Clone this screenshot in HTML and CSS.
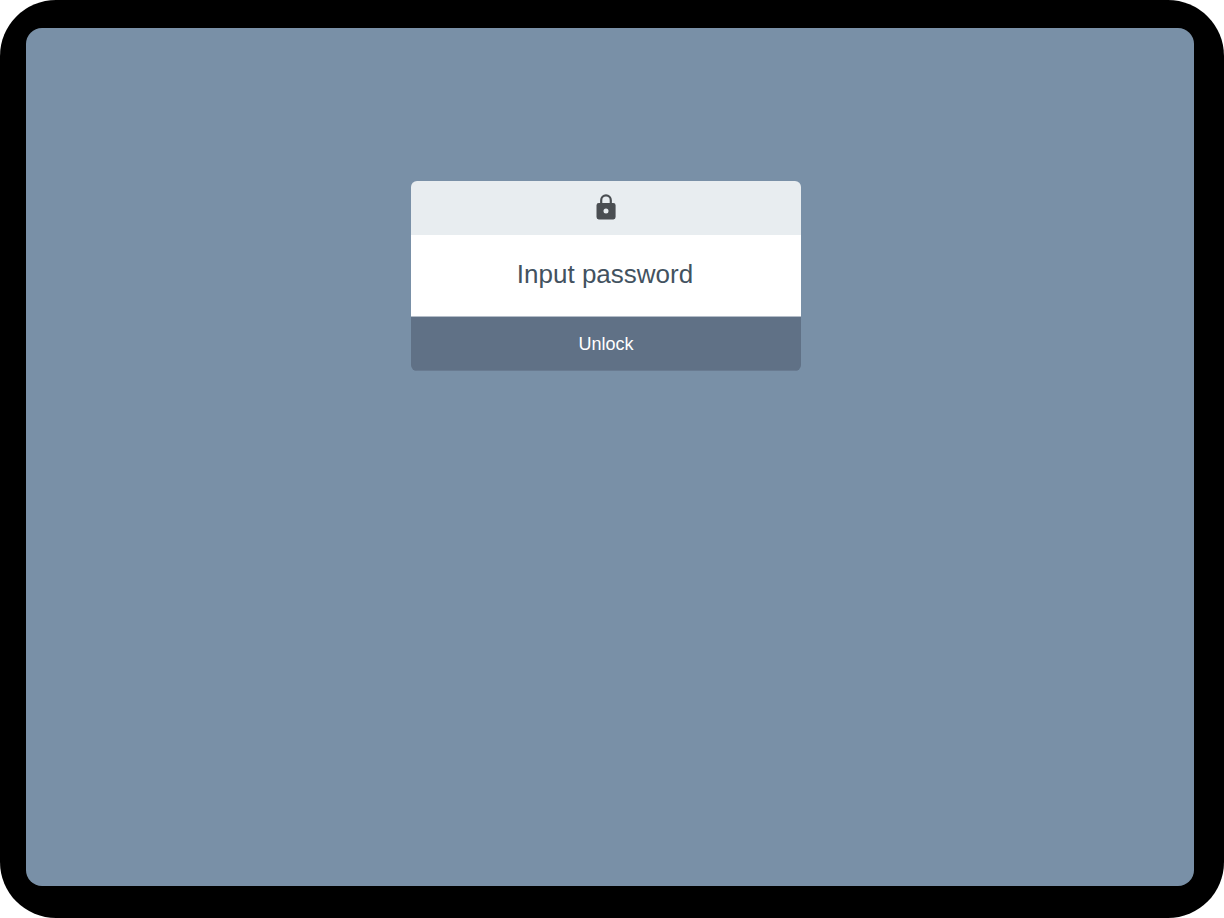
FILE: index.html
```
<!DOCTYPE html>
<html lang="en">
<head>
<meta charset="utf-8">
<meta name="viewport" content="width=device-width, initial-scale=1">
<title>Unlock</title>
<link rel="stylesheet" href="styles.css">
</head>
<body>
<div class="device">
  <main class="screen">
    <form class="card">
      <div class="card-header">
        <svg class="lock" viewBox="0 0 20 26" aria-hidden="true">
          <path fill-rule="evenodd" d="M17.300 9H15.900V6.200a5.900 5.900 0 0 0-11.800 0V9H2.800A2.300 2.300 0 0 0 .5 11.300v11.800A2.300 2.300 0 0 0 2.800 25.400h14.500a2.300 2.300 0 0 0 2.300-2.300V11.300A2.300 2.300 0 0 0 17.300 9zM6.300 9V6.200a3.700 3.700 0 0 1 7.400 0V9zM10 14.600a2.500 2.500 0 1 1 0 5 2.500 2.500 0 0 1 0-5z"/>
        </svg>
      </div>
      <input class="password" type="password" placeholder="Input password" aria-label="Input password">
      <button class="unlock" type="button">Unlock</button>
    </form>
  </main>
</div>
</body>
</html>
```
FILE: styles.css
```
* { box-sizing: border-box; }
body {
  margin: 0;
  background: #fff;
  font-family: "Liberation Sans", Arial, sans-serif;
}
.device {
  display: flex;
  min-height: 100vh;
  padding: 28px 30px 32px 26px;
  border-radius: 56px;
  background: #000;
}
.screen {
  flex: 1;
  display: flex;
  justify-content: center;
  align-items: flex-start;
  padding: 153px 24px 24px 16px;
  border-radius: 16px;
  background: #7990a7;
}
.card {
  display: flex;
  flex-direction: column;
  width: 100%;
  max-width: 390px;
  border-radius: 6px;
  overflow: hidden;
}
.card-header {
  display: flex;
  justify-content: center;
  align-items: center;
  height: 54px;
  padding-bottom: 2px;
  background: #e8edf0;
}
.lock {
  width: 20px;
  height: 26px;
  fill: #4a4e52;
}
.password {
  height: 82px;
  padding: 0 18px 2px 16px;
  border: 0;
  border-bottom: 1px solid #b4bdc8;
  border-radius: 0;
  background: #fff;
  color: #43525f;
  font: 26px "Liberation Sans", Arial, sans-serif;
  text-align: center;
}
.password::placeholder { color: #43525f; opacity: 1; }
.unlock {
  height: 54px;
  padding: 2px 16px 0;
  border: 0;
  border-bottom: 1px solid #697b91;
  background: #607186;
  color: #fff;
  font: 18px "Liberation Sans", Arial, sans-serif;
}
```
